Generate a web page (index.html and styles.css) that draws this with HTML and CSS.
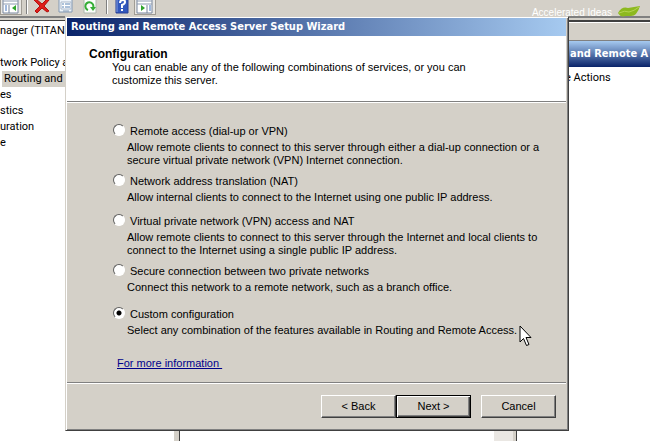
FILE: index.html
```html
<!DOCTYPE html>
<html lang="en">
<head>
<meta charset="utf-8">
<title>Routing and Remote Access Server Setup Wizard</title>
<link rel="stylesheet" href="styles.css">
</head>
<body>
<main class="console">
  <header class="toolbar">
    <button class="tool pressed" aria-label="Console tree"><svg width="18" height="14" viewBox="0 0 18 14"><path d="M1 -1h15v14H1z" fill="#fff" stroke="#76849b"/><path d="M1 1h15M1 4h15" stroke="#8e9bb0"/><path d="M7 5v8" stroke="#76849b"/><path d="M3 6h2M3 8h2M3 10h2" stroke="#4474bd"/><path d="M14 5v6L10 8z" fill="#2fa52c"/></svg></button>
    <span class="divider"></span>
    <button class="tool" aria-label="Delete"><svg width="18" height="14" viewBox="0 0 18 14"><path d="M3 -1L9 4L14 -1L16 0L11 6L16 11L14 12L9 8L4 13L2 11L7 6L1 0z" fill="#df1d1a" stroke="#b3110f"/></svg></button>
    <button class="tool" aria-label="Properties"><svg width="16" height="14" viewBox="0 0 16 14"><path d="M1 -1h13v13H1z" fill="#eef4fa" stroke="#8298b3"/><path d="M3 2h10v7H3z" fill="#fff" stroke="#a8b7ca"/><path d="M4 4h2M4 7h2M7 4h5M7 7h5" stroke="#5982b4"/><path d="M5 11h6" stroke="#8298b3"/></svg></button>
    <button class="tool" aria-label="Refresh"><svg width="16" height="14" viewBox="0 0 16 14"><path d="M2 -1h12v14H2z" fill="#fafdfa" stroke="#aeb8ae"/><path d="M6 10A4 4 0 1 1 11 8" fill="none" stroke="#35ad35" stroke-width="2"/><path d="M8 7h6l-3 4z" fill="#35ad35"/></svg></button>
    <span class="divider"></span>
    <button class="tool" aria-label="Help"><svg width="14" height="14" viewBox="0 0 14 14"><path d="M1 -1h12v14H1z" fill="#3157bd" stroke="#263f94"/><path d="M2 0v12" stroke="#859fe0"/><path d="M5 3Q5 0 8 0Q10 0 10 2Q10 4 7 5V8M7 9v2" fill="none" stroke="#fff" stroke-width="2"/></svg></button>
    <button class="tool pressed" aria-label="Action pane"><svg width="18" height="14" viewBox="0 0 18 14"><path d="M1 -1h15v14H1z" fill="#fff" stroke="#76849b"/><path d="M1 1h15M1 4h15" stroke="#8e9bb0"/><path d="M11 5v8" stroke="#76849b"/><path d="M13 6h2M13 8h2M13 10h2" stroke="#4474bd"/><path d="M5 5v6L9 8z" fill="#2fa52c"/></svg></button>
  </header>
  <div class="panes">
    <nav class="tree">
      <div>nager (TITANF</div>
      <div class="blank"></div>
      <div>twork Policy ar</div>
      <div><span class="selected">Routing and</span></div>
      <div>es</div>
      <div>stics</div>
      <div>uration</div>
      <div>e</div>
    </nav>
    <section class="content"><div class="scrollbar"></div></section>
    <aside class="actions">
      <h2>and Remote A</h2>
      <p>e Actions</p>
    </aside>
  </div>
</main>

<div class="brand"><span>Accelerated Ideas</span><svg width="24" height="14" viewBox="0 0 24 14"><path d="M1 8Q5 1 11 3Q17 2 23 1Q20 11 14 11Q11 11 8 11Q4 13 1 8z" fill="#8db91f"/><path d="M2 8Q8 5 12 7Q17 6 22 2" fill="none" stroke="#b5d451"/></svg></div>

<form class="wizard">
  <h1>Routing and Remote Access Server Setup Wizard</h1>
  <div class="intro">
    <h2>Configuration</h2>
    <p>You can enable any of the following combinations of services, or you can<br>customize this server.</p>
  </div>
  <div class="body">
    <div class="options">
      <div class="option">
        <input type="radio" name="config" id="remote"><label for="remote">Remote access (dial-up or VPN)</label>
        <p>Allow remote clients to connect to this server through either a dial-up connection or a<br>secure virtual private network (VPN) Internet connection.</p>
      </div>
      <div class="option">
        <input type="radio" name="config" id="nat"><label for="nat">Network address translation (NAT)</label>
        <p>Allow internal clients to connect to the Internet using one public IP address.</p>
      </div>
      <div class="option">
        <input type="radio" name="config" id="vpn"><label for="vpn">Virtual private network (VPN) access and NAT</label>
        <p>Allow remote clients to connect to this server through the Internet and local clients to<br>connect to the Internet using a single public IP address.</p>
      </div>
      <div class="option">
        <input type="radio" name="config" id="secure"><label for="secure">Secure connection between two private networks</label>
        <p>Connect this network to a remote network, such as a branch office.</p>
      </div>
      <div class="option">
        <input type="radio" name="config" id="custom" checked><label for="custom">Custom configuration</label>
        <p>Select any combination of the features available in Routing and Remote Access.</p>
      </div>
    </div>
    <a class="more" href="#info">For more information&nbsp;</a>
  </div>
  <footer class="buttons">
    <button type="button">&lt; Back</button>
    <button type="submit" class="default">Next &gt;</button>
    <button type="button" class="cancel">Cancel</button>
  </footer>
  <svg class="pointer" width="13" height="22" viewBox="0 0 13 22"><path d="M1 1V17L4.500 13.500L7.500 20.500L10 19.500L7 12.500H12z" fill="#fff" stroke="#000"/></svg>
</form>
</body>
</html>
```

FILE: styles.css
```css
* { box-sizing: border-box; }
body {
  position: relative;
  margin: 0;
  min-height: 100vh;
  overflow: hidden;
  background: #fff;
  color: #000;
  font: 11px/13px "Liberation Sans", Arial, sans-serif;
}
h1, h2, p { margin: 0; }
button { font: inherit; color: inherit; border-radius: 0; }

.console { display: flex; flex-direction: column; height: 100vh; overflow: hidden; font: 11px/16px Roboto, Tahoma, sans-serif; }
.toolbar {
  display: flex;
  align-items: flex-start;
  flex: 0 0 18px;
  height: 18px;
  background: #d4d0c8;
  border-bottom: 2px solid #808080;
}
.tool { display: flex; justify-content: center; width: 24px; height: 15px; padding: 0; border: 0; background: none; }
.tool.pressed { width: 22px; background: #e9e7e3; border: 1px solid #a09c94; border-top: 0; }
.divider { width: 2px; height: 14px; margin: 0 2px 0 4px; background: #808080; border-right: 1px solid #fff; }

.panes { display: flex; flex: 1; border-top: 2px solid #d4d0c8; }
.tree { flex: 0 0 174px; overflow: hidden; padding-top: 2px; border-top: 1px solid #404040; white-space: nowrap; }
.tree div { height: 16px; }
.selected { display: block; margin-left: 2px; padding-left: 2px; background: #d4d0c8; }
.content { flex: 0 0 343px; border-left: 5px solid #d4d0c8; border-right: 1px solid #404040; box-shadow: inset 1px 0 #404040; }
.scrollbar { height: 100%; width: 22px; margin-left: auto; background: #eae7e3; border-right: 3px solid #d4d0c8; }
.actions { flex: 1; overflow: hidden; border-top: 2px solid #404040; white-space: nowrap; }
.actions::before { content: ""; display: block; height: 17px; background: #d4d0c8; border-top: 1px solid #fff; border-bottom: 1px solid #808080; }
.actions h2 { height: 26px; padding-left: 53px; color: #fff; font: bold 11px/26px "DejaVu Sans Condensed", Tahoma, sans-serif; background: linear-gradient(#a6caf0, #0a246a); }
.actions p { padding: 3px 0 0 48px; }

.brand { position: absolute; top: 5px; right: 9px; display: flex; gap: 5px; color: #fff; font: 10px/16px "Liberation Sans", Arial, sans-serif; }

.wizard {
  position: absolute;
  top: 16px;
  left: 65px;
  right: 81px;
  padding: 1px 2px 2px 1px;
  background: #d4d0c8;
  border: 1px solid #d4d0c8;
  border-right: 1px solid #404040;
  border-bottom: 1px solid #404040;
  box-shadow: inset 1px 1px #fff, inset -1px -1px #808080;
}
.wizard h1 { height: 18px; padding-left: 4px; color: #fff; font: bold 11px/18px "DejaVu Sans Condensed", Tahoma, sans-serif; background: linear-gradient(90deg, #0a246a, #a6caf0); }
.intro { height: 66px; padding: 11px 22px 0; background: #fff; border-bottom: 1px solid #808080; }
.intro h2 { font: bold 12px/14px "Liberation Sans", Arial, sans-serif; }
.intro p { padding-left: 23px; }
.body { padding: 20px 46px 0; border-top: 1px solid #fff; }
.options { display: grid; grid-template-rows: 50px 40px 50px 43px auto; }
.option { display: grid; grid-template-columns: 17px auto; grid-auto-rows: min-content; }
.option label { line-height: 16px; }
.option p { grid-column: 1 / -1; padding: 2px 0 0 14px; white-space: nowrap; }
.option input {
  appearance: none;
  width: 12px;
  height: 12px;
  margin: 1px 0 0;
  border: 1px solid;
  border-color: #606060 #fff #fff #606060;
  border-radius: 50%;
  background: #fff;
}
.option input:checked { background: radial-gradient(circle, #000 2px, #fff 3px); }
.more { display: inline-block; margin: 20px 0 0 4px; color: #00008b; }
.buttons { display: flex; justify-content: flex-end; padding: 12px 10px 10px; border-top: 1px solid #808080; box-shadow: inset 0 1px #fff; margin-top: 12px; }
.buttons button {
  width: 75px;
  height: 23px;
  padding: 0;
  background: #d4d0c8;
  border: 1px solid;
  border-color: #fff #404040 #404040 #fff;
  box-shadow: inset -1px -1px #808080;
}
.buttons .default { border-color: #000; box-shadow: inset 1px 1px #fff, inset -1px -1px #404040, inset -2px -2px #808080; }
.buttons .cancel { margin-left: 10px; }
.pointer { position: absolute; right: 36px; bottom: 83px; }
```
